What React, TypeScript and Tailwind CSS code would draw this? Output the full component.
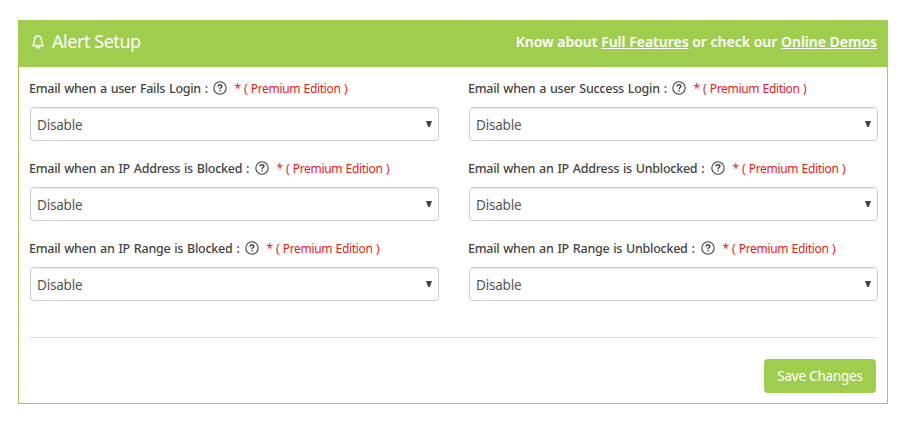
type FieldProps = { label: string; width: string; spacing: string };

const fields: FieldProps[] = [
  { label: 'Email when a user Fails Login :', width: 'w-[184px]', spacing: 'tracking-[-0.27px]' },
  { label: 'Email when a user Success Login :', width: 'w-[204px]', spacing: 'tracking-[-0.25px]' },
  { label: 'Email when an IP Address is Blocked :', width: 'w-[226px]', spacing: 'tracking-[-0.26px]' },
  { label: 'Email when an IP Address is Unblocked :', width: 'w-[243px]', spacing: 'tracking-[-0.26px]' },
  { label: 'Email when an IP Range is Blocked :', width: 'w-[216px]', spacing: 'tracking-[-0.26px]' },
  { label: 'Email when an IP Range is Unblocked :', width: 'w-[233px]', spacing: 'tracking-[-0.26px]' },
];

function BellIcon() {
  return (
    <svg className="-mt-1" width="12" height="14" viewBox="0 0 12 14" fill="none" stroke="white" strokeWidth="1.4" strokeLinejoin="round">
      <path d="M6 1C3.8 1 2.6 2.7 2.6 4.8C2.6 7.6 2 9 .8 10.7H11.2C10 9 9.4 7.6 9.4 4.8C9.4 2.7 8.2 1 6 1Z" />
      <path d="M4.5 11v.5a1.5 1.5 0 0 0 3 0V11" />
    </svg>
  );
}

function HelpIcon() {
  return (
    <svg className="shrink-0" width="14" height="14" viewBox="0 0 14 14" fill="none" stroke="#444" strokeWidth="1.1">
      <circle cx="7" cy="7" r="6.2" />
      <path d="M5.1 5.5C5.1 4.3 5.9 3.7 7 3.7S8.9 4.3 8.9 5.3C8.9 6.5 7.1 6.7 7.1 8.2" strokeWidth="1.4" />
      <path d="M7.1 9.2v1.4" strokeWidth="1.5" />
    </svg>
  );
}

function Field({ label, width, spacing }: FieldProps) {
  return (
    <div className="h-20">
      <div className="flex h-[26px] items-center whitespace-nowrap text-[12.5px]">
        <span className={`${width} ${spacing} shrink-0 font-[550] text-[#444] [word-spacing:0.9px]`}>{label}</span>
        <span className="-mt-0.5"><HelpIcon /></span>
        <span className="ml-[7.5px] text-[12px] tracking-[-0.31px] text-[#e42222] [word-spacing:0.5px]">* ( Premium Edition )</span>
      </div>
      <button className="ml-px mt-[5px] flex h-[34px] w-[409px] items-center justify-between rounded-[4px] border border-[#ccc] bg-white pl-[6px] pr-[6px] text-[13.5px] text-[#555] shadow-[inset_0_1px_1px_rgba(0,0,0,0.075)]">
        <span className="pt-[3px] tracking-[-0.2px]">Disable</span>
        <svg className="-mt-px" width="6" height="6" viewBox="0 0 6 6" fill="#444"><path d="M0 0h6L3.8 6H2.2Z" /></svg>
      </button>
    </div>
  );
}

export default function App() {
  return (
    <main className="h-[428px] w-[906px] bg-white pl-[18px] pt-5 font-['Noto_Sans','Open_Sans',sans-serif]">
      <section className="h-[384px] w-[870px] border border-[#9fce4e] bg-white">
        <header className="flex h-[46px] items-center justify-between bg-[#9fce4e] pl-[13px] pr-[10px] text-white">
          <h1 className="flex items-center gap-2 whitespace-nowrap text-[18px] font-normal tracking-[-0.45px]"><BellIcon /><span className="-mt-[5px]">Alert Setup</span></h1>
          <p className="-mt-1.5 whitespace-nowrap text-[14px] font-semibold">
            Know about <a className="underline">Full Features</a> or check our <a className="underline">Online Demos</a>
          </p>
        </header>
        <div className="grid grid-cols-[439px_410px] pl-[10px] pt-[9px]">
          {fields.map((field) => <Field key={field.label} {...field} />)}
        </div>
        <hr className="ml-[10px] mt-[21px] w-[848px] border-t border-[#ddd]" />
        <div className="flex justify-end pr-[11px] pt-[21px]">
          <button className="h-[34px] w-[112px] whitespace-nowrap rounded-[4px] bg-[#9fce4e] text-[13.5px] tracking-[-0.22px] text-white">Save Changes</button>
        </div>
      </section>
    </main>
  );
}
